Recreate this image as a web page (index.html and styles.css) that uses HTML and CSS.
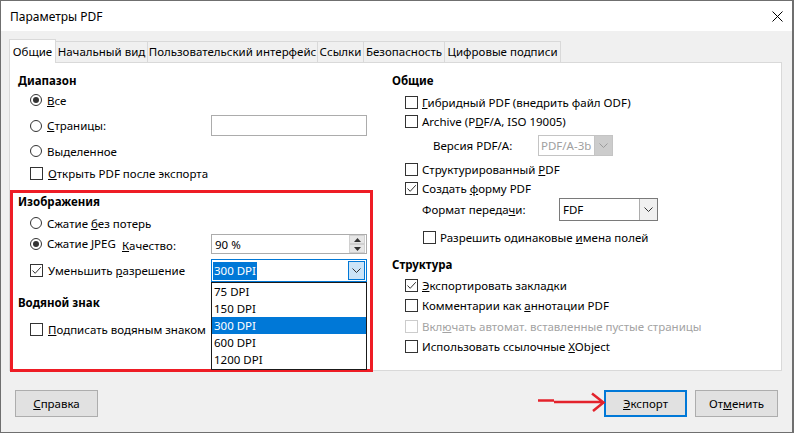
FILE: index.html
```html
<!DOCTYPE html>
<html lang="ru">
<head>
<meta charset="utf-8">
<title>Параметры PDF</title>
<link rel="stylesheet" href="styles.css">
</head>
<body>
<div class="window">
  <div class="titlebar">
    <span class="title">Параметры PDF</span>
    <svg class="close" width="11" height="11" viewBox="0 0 11 11"><path d="M0.5 0.5L10.5 10.5M10.5 0.5L0.5 10.5" stroke="#000" stroke-width="1"/></svg>
  </div>
  <div class="content">
    <div class="tabs">
      <div class="tab active">Общие</div>
      <div class="tab">Начальный вид</div>
      <div class="tab">Пользовательский интерфейс</div>
      <div class="tab">Ссылки</div>
      <div class="tab">Безопасность</div>
      <div class="tab">Цифровые подписи</div>
    </div>
    <div class="panel">
      <div class="col col-left">
        <div class="heading">Диапазон</div>
        <div class="row ind"><span class="rb on"></span><span><u>В</u>се</span></div>
        <div class="row ind field mt5 h21">
          <div class="grp"><span class="rb"></span><span><u>С</u>траницы:</span></div>
          <div class="input"></div>
        </div>
        <div class="row ind mt5"><span class="rb"></span><span>Выделенное</span></div>
        <div class="row ind mt2"><span class="cb"></span><span><u>О</u>ткрыть PDF после экспорта</span></div>

        <div class="heading mt9">Изображения</div>
        <div class="row ind mt2"><span class="rb"></span><span>Сжатие <u>б</u>ез потерь</span></div>
        <div class="row ind jpeg mt1">
          <div class="grp"><span class="rb on"></span><span class="up1">Сжатие <u>J</u>PEG</span></div>
          <span class="qlabel"><u>К</u>ачество:</span>
          <div class="spin">
            <span class="val">90 %</span>
            <span class="spinbtns">
              <span class="sb"><svg width="7" height="4" viewBox="0 0 7 4"><path d="M3.5 0L7 4H0Z" fill="#333"/></svg></span>
              <span class="sb"><svg width="7" height="4" viewBox="0 0 7 4"><path d="M0 0H7L3.5 4Z" fill="#333"/></svg></span>
            </span>
          </div>
        </div>
        <div class="row ind field mt5 h23">
          <div class="grp"><span class="cb on"><svg width="11" height="11" viewBox="0 0 11 11"><path d="M1.5 5.5L4.2 8.3L9.8 2.2" fill="none" stroke="#333" stroke-width="1"/></svg></span><span>Уменьшить <u>р</u>азрешение</span></div>
          <div class="combo active-combo">
            <span class="val"><span class="hl">300 DPI</span></span>
            <span class="ddbtn"><svg width="9" height="5" viewBox="0 0 9 5"><path d="M0.5 0.5L4.5 4.5L8.5 0.5" fill="none" stroke="#333" stroke-width="1"/></svg></span>
          </div>
        </div>

        <div class="heading mt11">Водяной знак</div>
        <div class="row ind mt7"><span class="cb"></span><span><u>П</u>одписать водяным знаком</span></div>
      </div>

      <div class="col col-right">
        <div class="heading">Общие</div>
        <div class="row rind mt3 h19"><span class="cb"></span><span><u>Г</u>ибридный PDF (внедрить файл ODF)</span></div>
        <div class="row rind h19"><span class="cb"></span><span>Archive (P<u>D</u>F/A, ISO 19005)</span></div>
        <div class="row ver mt4 h21">
          <span class="lbl-ver">Версия PDF/A:</span>
          <div class="combo disabled-combo">
            <span class="val">PDF/A-3b</span>
            <span class="ddbtn"><svg width="9" height="5" viewBox="0 0 9 5"><path d="M0.5 0.5L4.5 4.5L8.5 0.5" fill="none" stroke="#9a9a9a" stroke-width="1"/></svg></span>
          </div>
        </div>
        <div class="row rind mt4 h19"><span class="cb"></span><span>Структурированный <u>P</u>DF</span></div>
        <div class="row rind h19"><span class="cb on"><svg width="11" height="11" viewBox="0 0 11 11"><path d="M1.5 5.5L4.2 8.3L9.8 2.2" fill="none" stroke="#333" stroke-width="1"/></svg></span><span>Создать <u>ф</u>орму PDF</span></div>
        <div class="row fmt h23">
          <span class="lbl-fmt">Формат переда<u>ч</u>и:</span>
          <div class="combo fdf-combo">
            <span class="val">FDF</span>
            <span class="ddbtn"><svg width="9" height="5" viewBox="0 0 9 5"><path d="M0.5 0.5L4.5 4.5L8.5 0.5" fill="none" stroke="#333" stroke-width="1"/></svg></span>
          </div>
        </div>
        <div class="row dup mt7 h19"><span class="cb"></span><span>Разрешить одинаковые <u>и</u>мена полей</span></div>

        <div class="heading mt8">Структура</div>
        <div class="row rind mt1"><span class="cb on"><svg width="11" height="11" viewBox="0 0 11 11"><path d="M1.5 5.5L4.2 8.3L9.8 2.2" fill="none" stroke="#333" stroke-width="1"/></svg></span><span><u>Э</u>кспортировать закладки</span></div>
        <div class="row rind"><span class="cb"></span><span>Комментарии как <u>а</u>ннотации PDF</span></div>
        <div class="row rind mt1 disabled"><span class="cb"></span><span>Вкл<u>ю</u>чать автомат. вставленные пустые страницы</span></div>
        <div class="row rind"><span class="cb"></span><span>Использовать ссылочные <u>X</u>Object</span></div>
      </div>
    </div>
    <div class="buttons">
      <div class="btn"><span><u>С</u>правка</span></div>
      <div class="btn-group">
        <div class="btn default"><span><u>Э</u>кспорт</span></div>
        <div class="btn"><span>От<u>м</u>енить</span></div>
      </div>
    </div>
  </div>

  <div class="redbox"></div>
  <div class="dd-list">
    <div class="dd-item">75 DPI</div>
    <div class="dd-item">150 DPI</div>
    <div class="dd-item sel">300 DPI</div>
    <div class="dd-item">600 DPI</div>
    <div class="dd-item">1200 DPI</div>
  </div>
  <svg class="arrow" width="72" height="24" viewBox="0 0 72 24"><path d="M2 10.5H18M18 12H67M56 3.5L67.5 12.5L57 21" fill="none" stroke="#e3232c" stroke-width="2.5"/></svg>
</div>
</body>
</html>
```

FILE: styles.css
```css
html, body {
  margin: 0;
  background: #ffffff;
}
body {
  font-family: "Noto Sans", "Segoe UI", sans-serif;
  font-size: 11.5px;
  color: #000;
}
u {
  text-underline-offset: 1px;
}
.window {
  position: relative;
  width: 794px;
  height: 433px;
  box-sizing: border-box;
  border: 1px solid #6f6f6f;
  border-right-width: 2px;
  background: #f0f0f0;
}
.titlebar {
  height: 30px;
  background: #ffffff;
  display: flex;
  align-items: center;
  justify-content: space-between;
  padding: 0 9px 0 9px;
  box-sizing: border-box;
  font-size: 12px;
}
.close {
  display: block;
}
.content {
  padding: 8px 10px 0 8px;
}
.tabs {
  display: flex;
  align-items: flex-end;
}
.tab {
  box-sizing: border-box;
  height: 21px;
  line-height: 20px;
  border: 1px solid #d9d9d9;
  border-bottom: none;
  margin-left: -1px;
  background: #f0f0f0;
  white-space: nowrap;
  text-align: center;
}
.tab:nth-child(2) { width: 93px; }
.tab:nth-child(3) { width: 171px; }
.tab:nth-child(4) { width: 47px; }
.tab:nth-child(5) { width: 82px; }
.tab:nth-child(6) { width: 117px; }
.tab.active {
  width: 47px;
  height: 24px;
  line-height: 23px;
  background: #ffffff;
  margin-left: 0;
  margin-bottom: -1px;
  position: relative;
  z-index: 1;
}
.panel {
  height: 309px;
  box-sizing: border-box;
  border: 1px solid #d9d9d9;
  background: #ffffff;
  display: grid;
  grid-template-columns: 374px 1fr;
}
.col {
  padding-top: 8px;
  padding-left: 8px;
}
.heading {
  height: 19px;
  line-height: 19px;
  font-weight: bold;
}
.row {
  display: flex;
  align-items: center;
  height: 20px;
  white-space: nowrap;
}
.h19 { height: 19px; }
.h21 { height: 21px; }
.h23 { height: 23px; }
.mt1 { margin-top: 1px; }
.mt2 { margin-top: 2px; }
.mt3 { margin-top: 3px; }
.mt4 { margin-top: 4px; }
.mt5 { margin-top: 5px; }
.mt7 { margin-top: 7px; }
.mt8 { margin-top: 8px; }
.mt9 { margin-top: 9px; }
.mt11 { margin-top: 11px; }

.ind { padding-left: 12px; }
.rind { padding-left: 13px; }
.dup { padding-left: 31px; }

.grp {
  display: flex;
  align-items: center;
}
.field .grp { width: 181px; }
.jpeg .grp { width: 92px; }
.up1 { position: relative; top: -1px; }
.qlabel {
  width: 89px;
  padding-top: 3px;
}

.rb {
  width: 12px;
  height: 12px;
  box-sizing: border-box;
  border: 1px solid #333;
  border-radius: 50%;
  margin-right: 5px;
  display: flex;
  align-items: center;
  justify-content: center;
  flex: none;
  background: #fff;
}
.rb.on::after {
  content: "";
  width: 6px;
  height: 6px;
  border-radius: 50%;
  background: #333;
}
.cb {
  width: 13px;
  height: 13px;
  box-sizing: border-box;
  border: 1px solid #333;
  margin-right: 5px;
  display: flex;
  align-items: center;
  justify-content: center;
  flex: none;
  background: #fff;
}
.cb svg { display: block; }
.rind .cb, .dup .cb { margin-right: 4px; }

.disabled { color: #a3a3a3; }
.disabled .cb { border-color: #cccccc; }

.input {
  width: 156px;
  height: 21px;
  box-sizing: border-box;
  border: 1px solid #acacac;
  background: #fff;
}
.spin {
  width: 156px;
  height: 20px;
  box-sizing: border-box;
  border: 1px solid #acacac;
  display: flex;
  align-items: center;
  background: #fff;
}
.spin .val {
  flex: 1;
  padding-left: 3px;
}
.spinbtns {
  display: flex;
  flex-direction: column;
  width: 16px;
  height: 18px;
  margin-right: 1px;
}
.sb {
  flex: 1;
  display: flex;
  align-items: center;
  justify-content: center;
  background: #e6e6e6;
  border: 1px solid #d0d0d0;
  box-sizing: border-box;
}
.sb svg { display: block; }

.combo {
  display: flex;
  box-sizing: border-box;
  border: 1px solid #7a7a7a;
  background: #fff;
  height: 100%;
}
.combo .val {
  flex: 1;
  display: flex;
  align-items: center;
  padding-left: 2px;
}
.ddbtn {
  width: 17px;
  display: flex;
  align-items: center;
  justify-content: center;
  border-left: 1px solid #acacac;
  background: #f0f0f0;
}
.ddbtn svg { display: block; }

.active-combo {
  width: 156px;
  border-color: #0078d7;
}
.active-combo .val {
  padding-left: 1px;
}
.hl {
  background: #0078d7;
  color: #fff;
  padding: 1px 1px;
  line-height: 16px;
}
.active-combo .ddbtn {
  background: #cce4f7;
  border: 1px solid #0078d7;
  margin: 1px;
  width: 15px;
}

.ver { padding-left: 41px; }
.lbl-ver { width: 105px; }
.disabled-combo {
  width: 75px;
  border-color: #c4c4c4;
  color: #a0a0a0;
}
.disabled-combo .ddbtn {
  background: #cccccc;
  border-left: 1px solid #c4c4c4;
}
.fmt { padding-left: 30px; }
.lbl-fmt { width: 137px; }
.fdf-combo { width: 99px; }
.fdf-combo .val { padding-left: 3px; }

.buttons {
  display: flex;
  justify-content: space-between;
  margin-top: 19px;
  padding: 0 4px 0 6px;
}
.btn-group {
  display: flex;
  gap: 8px;
}
.btn {
  width: 83px;
  height: 27px;
  box-sizing: border-box;
  border: 1px solid #adadad;
  background: #e1e1e1;
  display: flex;
  align-items: center;
  justify-content: center;
}
.btn.default {
  border: 2px solid #0078d7;
}

.redbox {
  position: absolute;
  left: 9px;
  top: 189px;
  width: 363px;
  height: 182px;
  box-sizing: border-box;
  border: 3px solid #ee1c25;
}
.dd-list {
  position: absolute;
  left: 210px;
  top: 281px;
  width: 156px;
  height: 88px;
  box-sizing: border-box;
  border: 1px solid #1a1a1a;
  background: #fff;
}
.dd-item {
  height: 17px;
  line-height: 17px;
  padding-left: 2px;
}
.dd-item.sel {
  background: #0078d7;
  color: #fff;
}
.arrow {
  position: absolute;
  left: 535px;
  top: 389px;
}
```
